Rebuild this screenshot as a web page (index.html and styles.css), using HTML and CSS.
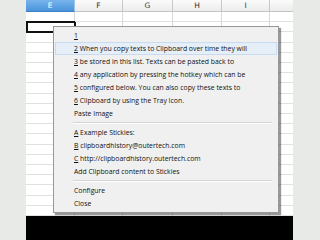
FILE: index.html
```html
<!DOCTYPE html>
<html>
<head>
<meta charset="utf-8">
<link rel="stylesheet" href="styles.css">
</head>
<body>
<div class="side"></div>
<div class="sheet">
  <div class="head">
    <div class="hc sel" style="width:49px">E</div>
    <div class="hc" style="width:48px">F</div>
    <div class="hc" style="width:50px">G</div>
    <div class="hc" style="width:49px">H</div>
    <div class="hc" style="width:48px">I</div>
    <div class="hc last"></div>
  </div>
  <div class="grid">
    <div class="col" style="width:49px"><div class="cur"></div></div>
    <div class="col" style="width:48px"></div>
    <div class="col" style="width:50px"></div>
    <div class="col" style="width:49px"></div>
    <div class="col" style="width:48px"></div>
    <div class="col last"></div>
  </div>
  <div class="black"></div>
</div>
<div class="side right"></div>

<div class="menu">
  <div class="item"><u>1</u></div>
  <div class="item hot"><u>2</u> When you copy texts to Clipboard over time they will</div>
  <div class="item"><u>3</u> be stored in this list. Texts can be pasted back to</div>
  <div class="item"><u>4</u> any application by pressing the hotkey which can be</div>
  <div class="item"><u>5</u> configured below. You can also copy these texts to</div>
  <div class="item"><u>6</u> Clipboard by using the Tray Icon.</div>
  <div class="item">Paste Image</div>
  <div class="sep"></div>
  <div class="item"><u>A</u> Example Stickies:</div>
  <div class="item"><u>B</u> clipboardhistory@outertech.com</div>
  <div class="item"><u>C</u> http://clipboardhistory.outertech.com</div>
  <div class="item">Add Clipboard content to Stickies</div>
  <div class="sep"></div>
  <div class="item">Configure</div>
  <div class="item">Close</div>
</div>
</body>
</html>
```
FILE: styles.css
```css
html, body {
  margin: 0;
  padding: 0;
}
body {
  width: 320px;
  height: 240px;
  display: flex;
  background: #e7eae7;
  overflow: hidden;
  font-family: "Open Sans", "Noto Sans", sans-serif;
}
.side {
  width: 26px;
  flex: none;
  background: #e7eae7;
}
.side.right {
  flex: 1;
}
.sheet {
  width: 267px;
  flex: none;
  display: flex;
  flex-direction: column;
  background: #fff;
}
.head {
  height: 12px;
  display: flex;
  flex: none;
}
.hc {
  box-sizing: border-box;
  height: 12px;
  border-right: 1px solid #c9c9c9;
  border-bottom: 1px solid #c4c4c4;
  background: linear-gradient(#fbfbfb, #ececec);
  color: #333;
  font-size: 7.5px;
  line-height: 11px;
  text-align: center;
  font-family: "DejaVu Sans", sans-serif;
}
.hc.sel {
  background: linear-gradient(#78b4ec, #4a94dc);
  color: #fff;
  border-right-color: #9cc3e8;
  border-bottom-color: #3b7fc4;
}
.hc.last, .col.last {
  flex: 1;
  border-right: none;
}
.grid {
  flex: 1;
  display: flex;
}
.col {
  box-sizing: border-box;
  border-right: 1px solid #d9d9d9;
  background: repeating-linear-gradient(to bottom, transparent 0, transparent 9.2px, #e0e0e0 9.2px, #e0e0e0 10.2px);
}
.cur {
  box-sizing: border-box;
  margin-top: 9px;
  width: 50px;
  height: 12px;
  border: 2px solid #111;
}
.black {
  height: 24px;
  flex: none;
  background: #000;
}
.menu {
  position: absolute;
  left: 53px;
  top: 26px;
  width: 226px;
  box-sizing: border-box;
  padding: 2px 0 2px;
  background: #f0f0f0;
  border: 1px solid #979797;
  box-shadow: 2px 2px 1px rgba(0, 0, 0, 0.4);
  color: #111;
  font-size: 6.85px;
}
.item {
  height: 13px;
  line-height: 13px;
  padding-left: 19px;
  white-space: nowrap;
  box-sizing: border-box;
  margin: 0 1px;
}
.item.hot {
  background: #e6eef8;
  border: 1px solid #c7dcf2;
  line-height: 11px;
  padding-left: 18px;
}
.sep {
  height: 6px;
  margin: 0 6px 0 19px;
  background: linear-gradient(to bottom, transparent 2px, #d5d5d5 2px, #d5d5d5 3px, #fff 3px, #fff 4px, transparent 4px);
}
```
